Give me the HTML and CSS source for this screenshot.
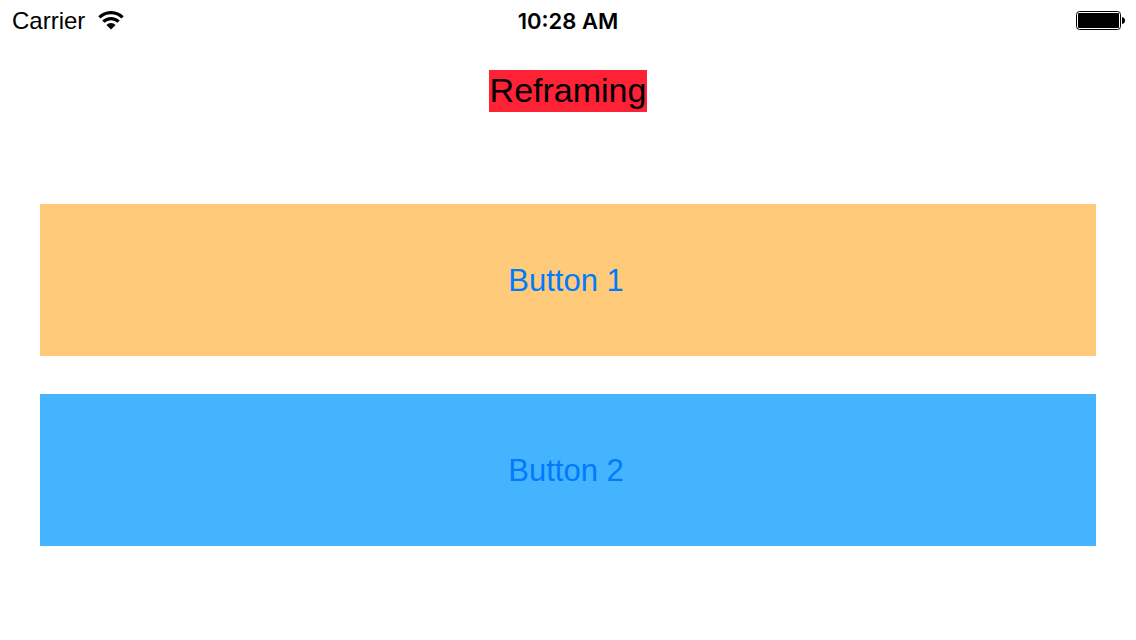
FILE: index.html
```html
<!DOCTYPE html>
<html lang="en">
<head>
<meta charset="utf-8">
<title>Reframing</title>
<link rel="stylesheet" href="styles.css">
</head>
<body>
<header class="status">
  <div class="carrier"><span>Carrier</span>
    <svg class="wifi" width="26" height="20" viewBox="0 0 26 20" aria-hidden="true">
      <g fill="none" stroke="#000" stroke-width="3.2">
        <path d="M1.4 6.4a16.4 16.4 0 0 1 23.2 0"/>
        <path d="M5.4 10.7a10.8 10.8 0 0 1 15.2 0"/>
      </g>
      <path d="M8.4 14.1a6.3 6.3 0 0 1 9.2 0L13 18.6z"/>
    </svg>
  </div>
  <time class="time">10:28 AM</time>
  <svg class="battery" width="50" height="20" viewBox="0 0 50 20" aria-hidden="true">
    <rect x=".5" y=".5" width="44" height="18" rx="3" fill="none" stroke="#000"/>
    <rect x="2" y="2" width="41" height="15" rx="1"/>
    <path d="M46 6q3 .5 3 3.5t-3 3.5z"/>
  </svg>
</header>
<main class="content">
  <h1 class="title">Reframing</h1>
  <div class="buttons">
    <button class="button orange" type="button">Button 1</button>
    <button class="button blue" type="button">Button 2</button>
  </div>
</main>
</body>
</html>
```
FILE: styles.css
```css
* {
  box-sizing: border-box;
}

body {
  margin: 0;
  background: #fff;
  color: #000;
  font-family: "Liberation Sans", Arial, sans-serif;
}

.status {
  display: grid;
  grid-template-columns: 1fr auto 1fr;
  align-items: center;
  height: 42px;
  padding: 0 10px;
  font-size: 24px;
}

.carrier {
  display: flex;
  align-items: center;
  gap: 13px;
  padding-left: 2px;
}

.time {
  font-family: Inter, "Liberation Sans", sans-serif;
  font-size: 22px;
  font-weight: 600;
}

.battery {
  justify-self: end;
}

.content {
  display: flex;
  flex-direction: column;
  align-items: center;
  padding: 28px 40px 0;
}

.title {
  margin: 0;
  padding: 0 1px 2px;
  background: #ff2236;
  font-size: 34px;
  font-weight: 400;
  line-height: 40px;
}

.buttons {
  display: grid;
  gap: 38px;
  width: 100%;
  margin-top: 92px;
}

.button {
  height: 152px;
  border: 0;
  padding: 2px 4px 0 0;
  color: #007aff;
  font: inherit;
  font-size: 31px;
}

.orange {
  background: #ffca7a;
}

.blue {
  background: #45b4ff;
}
```
